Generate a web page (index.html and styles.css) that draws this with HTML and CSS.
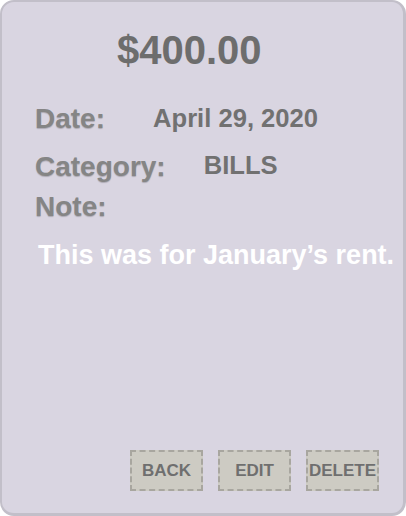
FILE: index.html
```html
<!DOCTYPE html>
<html>
<head>
<meta charset="utf-8">
<link rel="stylesheet" href="styles.css">
</head>
<body>
<div class="card">
  <div class="amount">$400.00</div>
  <div class="row row-date"><span class="label">Date:</span><span class="value value-date">April 29, 2020</span></div>
  <div class="row row-cat"><span class="label">Category:</span><span class="value value-cat">BILLS</span></div>
  <div class="row row-note"><span class="label">Note:</span></div>
  <div class="note">This was for January’s rent.</div>
  <div class="actions">
    <div class="btn">BACK</div>
    <div class="btn">EDIT</div>
    <div class="btn">DELETE</div>
  </div>
</div>
</body>
</html>
```
FILE: styles.css
```css
html, body {
  margin: 0;
  padding: 0;
  background: #ffffff;
}
body {
  font-family: "Liberation Sans", Arial, sans-serif;
}
.card {
  box-sizing: border-box;
  width: 406px;
  height: 516px;
  background: #d9d5e1;
  border: 2px solid #c2bfc9;
  border-bottom-width: 3px;
  border-right-width: 3px;
  border-radius: 14px;
  display: flex;
  flex-direction: column;
  padding: 24px 0 0 33px;
}
.amount {
  font-size: 40px;
  font-weight: bold;
  line-height: 48px;
  color: #6d6d6d;
  margin-left: 82px;
}
.row {
  height: 40px;
  line-height: 40px;
  white-space: nowrap;
}
.row-date { margin-top: 24px; }
.row-cat { margin-top: 7px; }
.row-note { margin-top: 2px; }
.label {
  font-size: 28px;
  font-weight: bold;
  color: #858585;
  text-shadow: 0 1px 1px rgba(0, 0, 0, 0.2);
}
.value {
  font-size: 25.6px;
  font-weight: bold;
  color: #717171;
}
.value-date {
  margin-left: 48px;
  vertical-align: 1px;
}
.value-cat {
  margin-left: 38px;
  vertical-align: 2px;
}
.note {
  margin-top: 8px;
  margin-left: 3px;
  height: 40px;
  line-height: 40px;
  font-size: 27px;
  font-weight: bold;
  color: #ffffff;
  white-space: nowrap;
}
.actions {
  margin-top: auto;
  display: flex;
  justify-content: flex-end;
  gap: 15px;
  padding-right: 24px;
  padding-bottom: 22px;
}
.btn {
  box-sizing: border-box;
  width: 73px;
  height: 41px;
  background: #cdcbc3;
  border: 2px dashed #a8a69f;
  display: flex;
  align-items: center;
  justify-content: center;
  font-size: 17px;
  font-weight: bold;
  color: #6f6f6f;
  white-space: nowrap;
}
```
